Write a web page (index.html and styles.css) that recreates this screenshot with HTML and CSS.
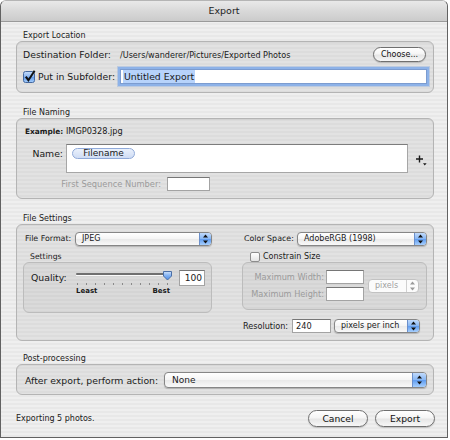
FILE: index.html
```html
<!DOCTYPE html>
<html>
<head>
<meta charset="utf-8">
<title>Export</title>
<link rel="stylesheet" href="styles.css">
</head>
<body>
<div class="window">
  <div class="titlebar">Export</div>
  <div class="content">
    <div class="group-label first">Export Location</div>
    <div class="box loc">
      <span class="lbl">Destination Folder:</span>
      <div class="dest">
        <span class="path">/Users/wanderer/Pictures/Exported Photos</span>
        <button class="btn btn-choose">Choose...</button>
      </div>
      <div class="sub-lbl">
        <svg class="cb-checked" width="13" height="13" viewBox="0 0 13 13"><defs><linearGradient id="cbg" x1="0" y1="0" x2="0" y2="1"><stop offset="0" stop-color="#c8defb"/><stop offset="0.5" stop-color="#84b2f1"/><stop offset="0.5" stop-color="#5e98ea"/><stop offset="1" stop-color="#a6cffc"/></linearGradient></defs><rect x="0.5" y="1.5" width="11" height="11" rx="2" fill="url(#cbg)" stroke="#44689f"/><path d="M2.8 6.6 L5.4 10.2 L11.6 0.8" fill="none" stroke="#111" stroke-width="2"/></svg>
        <span class="lbl">Put in Subfolder:</span>
      </div>
      <div class="field focus"><span class="selected">Untitled Export</span></div>
    </div>

    <div class="group-label">File Naming</div>
    <div class="box naming">
      <div class="example"><b>Example:</b> IMGP0328.jpg</div>
      <div class="name-row">
        <span class="lbl name-lbl">Name:</span>
        <div class="token-field"><span class="token">Filename</span></div>
        <svg class="plus" width="11" height="11" viewBox="0 0 11 11"><path d="M3.5 0.5 V7.5 M0 4 H7" stroke="#1a1a1a" stroke-width="1.4"/><path d="M7 8.2 H10.6 L8.8 10.4 Z" fill="#1a1a1a"/></svg>
      </div>
      <div class="seq-row">
        <span class="seq-lbl">First Sequence Number:</span>
        <div class="field seq-field"></div>
      </div>
    </div>

    <div class="group-label">File Settings</div>
    <div class="box settings">
      <div class="col-left">
        <div class="row-popup">
          <span class="sm-lbl ff-lbl">File Format:</span>
          <div class="popup ff-popup"><span class="ptext">JPEG</span><span class="arrows"><svg width="7" height="10" viewBox="0 0 7 10"><path d="M3.5 0.5 L6 3.6 H1 Z M3.5 9.5 L6 6.4 H1 Z" fill="#111"/></svg></span></div>
        </div>
        <div class="sublabel">Settings</div>
        <div class="inner-box quality">
          <span class="lbl q-lbl">Quality:</span>
          <div class="slider">
            <svg width="96" height="17" viewBox="0 0 96 17">
              <defs><linearGradient id="thg" x1="0" y1="0" x2="0" y2="1"><stop offset="0" stop-color="#cfe2fb"/><stop offset="0.5" stop-color="#7fb0f2"/><stop offset="1" stop-color="#4f8ce6"/></linearGradient></defs>
              <rect x="0" y="4" width="94" height="2" rx="1" fill="#6f6f6f"/>
              <rect x="0" y="6" width="94" height="1" fill="#fafafa"/>
              <g fill="#8a8a8a">
                <rect x="1" y="14" width="1" height="2"/><rect x="10" y="14" width="1" height="2"/><rect x="19" y="14" width="1" height="2"/><rect x="28" y="14" width="1" height="2"/><rect x="37" y="14" width="1" height="2"/><rect x="46" y="14" width="1" height="2"/><rect x="55" y="14" width="1" height="2"/><rect x="64" y="14" width="1" height="2"/><rect x="73" y="14" width="1" height="2"/><rect x="82" y="14" width="1" height="2"/><rect x="91" y="14" width="1" height="2"/>
              </g>
              <path d="M87.5 2.5 H95.5 V7 L91.5 11 L87.5 7 Z" fill="url(#thg)" stroke="#4a6ea6"/>
            </svg>
            <div class="slider-labels"><span>Least</span><span>Best</span></div>
          </div>
          <div class="field q-field">100</div>
        </div>
      </div>
      <div class="col-right">
        <div class="row-popup">
          <span class="sm-lbl cs-lbl">Color Space:</span>
          <div class="popup cs-popup"><span class="ptext">AdobeRGB (1998)</span><span class="arrows"><svg width="7" height="10" viewBox="0 0 7 10"><path d="M3.5 0.5 L6 3.6 H1 Z M3.5 9.5 L6 6.4 H1 Z" fill="#111"/></svg></span></div>
        </div>
        <div class="constrain"><span class="cb"></span><span class="sm-lbl">Constrain Size</span></div>
        <div class="inner-box maxbox">
          <div class="max-grid">
            <span class="dis-lbl">Maximum Width:</span><div class="field max-field"></div>
            <span class="dis-lbl">Maximum Height:</span><div class="field max-field"></div>
          </div>
          <div class="popup disabled px-popup"><span class="ptext">pixels</span><span class="arrows"><svg width="7" height="10" viewBox="0 0 7 10"><path d="M3.5 0.5 L6 3.6 H1 Z M3.5 9.5 L6 6.4 H1 Z" fill="#9a9a9a"/></svg></span></div>
        </div>
        <div class="res-row">
          <span class="sm-lbl res-lbl">Resolution:</span>
          <div class="field res-field">240</div>
          <div class="popup res-popup"><span class="ptext">pixels per inch</span><span class="arrows"><svg width="7" height="10" viewBox="0 0 7 10"><path d="M3.5 0.5 L6 3.6 H1 Z M3.5 9.5 L6 6.4 H1 Z" fill="#111"/></svg></span></div>
        </div>
      </div>
    </div>

    <div class="group-label post">Post-processing</div>
    <div class="box postbox">
      <span class="lbl">After export, perform action:</span>
      <div class="popup big-popup"><span class="ptext">None</span><span class="arrows"><svg width="7" height="10" viewBox="0 0 7 10"><path d="M3.5 0.5 L6 3.6 H1 Z M3.5 9.5 L6 6.4 H1 Z" fill="#111"/></svg></span></div>
    </div>
  </div>
  <div class="footer">
    <span class="status">Exporting 5 photos.</span>
    <button class="btn btn-cancel">Cancel</button>
    <button class="btn btn-export">Export</button>
  </div>
</div>
</body>
</html>
```
FILE: styles.css
```css
* { box-sizing: border-box; }
html, body { margin: 0; padding: 0; }
body {
  width: 450px;
  height: 440px;
  overflow: hidden;
  background: #ffffff;
  font-family: "DejaVu Sans", "Noto Sans", sans-serif;
  color: #1a1a1a;
}
.window {
  width: 448px;
  height: 438px;
  border: 1px solid #626262;
  border-top-color: #b5b5b5;
  border-radius: 6px 6px 0 0;
  background: repeating-linear-gradient(to bottom, #efefef 0, #efefef 2px, #e8e8e8 2px, #e8e8e8 4px);
  overflow: hidden;
  display: flex;
  flex-direction: column;
}
.titlebar {
  height: 21px;
  line-height: 20px;
  text-align: center;
  font-size: 9.5px;
  color: #1e1e1e;
  background: linear-gradient(#e9e9e9, #d9d9d9 50%, #cbcbcb);
  border-bottom: 1px solid #9a9a9a;
  border-radius: 5px 5px 0 0;
}
.content {
  padding: 0 13px 0 15px;
}
.group-label {
  height: 11px;
  line-height: 11px;
  font-size: 8px;
  color: #222;
  padding-left: 7px;
  margin-top: 14px;
}
.group-label.first { margin-top: 8px; }
.group-label.post { margin-top: 12px; }
.box {
  width: 418px;
  border: 1px solid #b4b4b4;
  border-radius: 6px;
  background: rgba(0, 0, 0, 0.05);
  box-shadow: inset 0 1px 1px rgba(0, 0, 0, 0.05);
}
.lbl { font-size: 9.3px; line-height: 15px; white-space: nowrap; }
.sm-lbl { font-size: 8px; white-space: nowrap; }

/* Export location */
.loc {
  display: grid;
  grid-template-columns: 97px 1fr;
  grid-template-rows: 15px 15px;
  row-gap: 7px;
  padding: 5px 6px 8px 6px;
}
.dest { display: flex; align-items: center; }
.path { font-size: 8.1px; white-space: nowrap; }
.btn {
  appearance: none;
  -webkit-appearance: none;
  margin: 0;
  padding: 0;
  font-family: "DejaVu Sans", sans-serif;
  color: #111;
  border: 1px solid #6f6f6f;
  border-radius: 9px;
  background: linear-gradient(#ffffff, #f5f5f5 45%, #e6e6e6 55%, #f7f7f7);
  box-shadow: 0 1px 1px rgba(0, 0, 0, 0.18);
  text-align: center;
}
.btn-choose {
  margin-left: auto;
  margin-right: 1px;
  width: 53px;
  height: 15px;
  font-size: 8px;
  line-height: 13px;
}
.sub-lbl { display: flex; align-items: center; }
.cb-checked { margin-top: -1px; margin-right: 2px; }
.field {
  background: #fff;
  border: 1px solid #a3a3a3;
  border-top-color: #767676;
}
.focus {
  height: 15px;
  padding-left: 2px;
  box-shadow: 0 0 0 2px #8db2e8, 0 0 0 3px rgba(120, 160, 220, 0.35);
  border-color: #7c9cd0;
  display: flex;
  align-items: center;
}
.selected {
  background: #b7d3fb;
  font-size: 9.3px;
  line-height: 13px;
  padding: 0 1px;
}

/* Naming */
.naming { padding: 7px 0 7px 0; }
.example { font-size: 8.2px; line-height: 10px; padding-left: 8px; white-space: nowrap; }
.example b { font-size: 7.4px; }
.name-row { display: flex; margin-top: 7px; height: 29px; }
.name-lbl { width: 49px; text-align: right; padding-right: 3px; margin-top: 2px; }
.token-field {
  width: 342px;
  height: 29px;
  background: #fff;
  border: 1px solid #a6a6a6;
  border-top-color: #7c7c7c;
  padding: 3px 0 0 5px;
}
.token {
  display: block;
  width: 63px;
  height: 11px;
  border: 1px solid #90aad9;
  border-radius: 6px;
  background: linear-gradient(#eaf1fc, #cfdcf4);
  font-size: 9px;
  line-height: 9px;
  text-align: center;
}
.plus { margin-left: 8px; margin-top: 11px; }
.seq-row { display: flex; margin-top: 4px; height: 14px; }
.seq-lbl {
  width: 144px;
  text-align: right;
  font-size: 8.3px;
  line-height: 14px;
  color: #9b9b9b;
  white-space: nowrap;
}
.seq-field { margin-left: 6px; width: 43px; height: 14px; }

/* File settings */
.settings {
  display: flex;
  gap: 30px;
  padding: 6px 6px 7px 6px;
}
.col-left { width: 189px; }
.col-right { width: 185px; }
.row-popup { display: flex; align-items: center; height: 15px; }
.ff-lbl, .cs-lbl { margin-left: 2px; font-size: 7.9px; }
.popup {
  display: flex;
  height: 14px;
  border: 1px solid #868686;
  border-radius: 4px;
  background: linear-gradient(#ffffff, #f4f4f4 50%, #e9e9e9 51%, #f9f9f9);
  box-shadow: 0 1px 1px rgba(0, 0, 0, 0.2);
  overflow: hidden;
}
.ptext {
  flex: 1;
  font-size: 8px;
  line-height: 12px;
  padding-left: 6px;
  white-space: nowrap;
}
.arrows {
  width: 12px;
  display: flex;
  align-items: center;
  justify-content: center;
  background: linear-gradient(#c1dafb, #86b6f4 50%, #5f9cf0 51%, #a7cffd);
  border-left: 1px solid #6b8fca;
}
.ff-popup { margin-left: auto; width: 137px; }
.cs-popup { margin-left: auto; width: 130px; }
.sublabel {
  margin-top: 5px;
  height: 11px;
  line-height: 11px;
  font-size: 7.7px;
  padding-left: 7px;
}
.inner-box {
  border: 1px solid #bcbcbc;
  border-radius: 6px;
  background: rgba(0, 0, 0, 0.035);
}
.quality {
  height: 51px;
  display: flex;
  align-items: flex-start;
  padding-left: 7px;
}
.q-lbl { width: 45px; margin-top: 10px; line-height: 10px; }
.slider { width: 96px; margin-top: 6px; }
.slider svg { display: block; }
.slider-labels {
  display: flex;
  justify-content: space-between;
  padding-right: 2px;
  font-size: 7px;
  font-weight: bold;
  line-height: 10px;
}
.q-field {
  margin-left: 7px;
  margin-top: 7px;
  width: 26px;
  height: 16px;
  text-align: right;
  padding-right: 2px;
  font-size: 9.1px;
  line-height: 14px;
}
.constrain {
  margin-top: 5px;
  height: 11px;
  display: flex;
  align-items: center;
}
.cb {
  width: 10px;
  height: 10px;
  margin-left: 8px;
  margin-right: 3px;
  border: 1px solid #8c8c8c;
  border-radius: 2px;
  background: linear-gradient(#ffffff, #e4e4e4);
}
.maxbox {
  display: flex;
  align-items: center;
  padding: 7px 0 8px 0;
}
.max-grid {
  display: grid;
  grid-template-columns: 81px 38px;
  grid-template-rows: 14px 14px;
  column-gap: 2px;
  row-gap: 3px;
}
.dis-lbl {
  font-size: 8.2px;
  line-height: 14px;
  color: #9b9b9b;
  text-align: right;
  white-space: nowrap;
}
.max-field { height: 14px; }
.px-popup { margin-left: 4px; width: 51px; }
.popup.disabled {
  border-color: #c2c2c2;
  box-shadow: none;
  background: #fbfbfb;
}
.popup.disabled .ptext { color: #a0a0a0; }
.popup.disabled .arrows { background: transparent; border-left-color: #d0d0d0; }
.res-row {
  margin-top: 8px;
  height: 15px;
  display: flex;
  align-items: center;
}
.res-lbl { width: 50px; padding-left: 1px; font-size: 8.1px; }
.res-field {
  width: 39px;
  height: 14px;
  font-size: 8.2px;
  line-height: 12px;
  padding-left: 3px;
}
.res-popup { margin-left: 3px; width: 86px; }

/* Post-processing */
.postbox {
  display: flex;
  align-items: center;
  padding: 7px 6px 6px 8px;
}
.big-popup { margin-left: auto; width: 263px; height: 16px; }
.big-popup .ptext { font-size: 9px; line-height: 14px; padding-left: 7px; }
.big-popup .arrows { width: 14px; }

/* Footer */
.footer {
  margin-top: 15px;
  height: 17px;
  display: flex;
  align-items: center;
  padding: 0 12px 0 15px;
}
.status { font-size: 8px; white-space: nowrap; }
.btn-cancel, .btn-export {
  width: 60px;
  height: 17px;
  font-size: 9.2px;
  line-height: 15px;
}
.btn-cancel { margin-left: auto; }
.btn-export { margin-left: 7px; }
```
